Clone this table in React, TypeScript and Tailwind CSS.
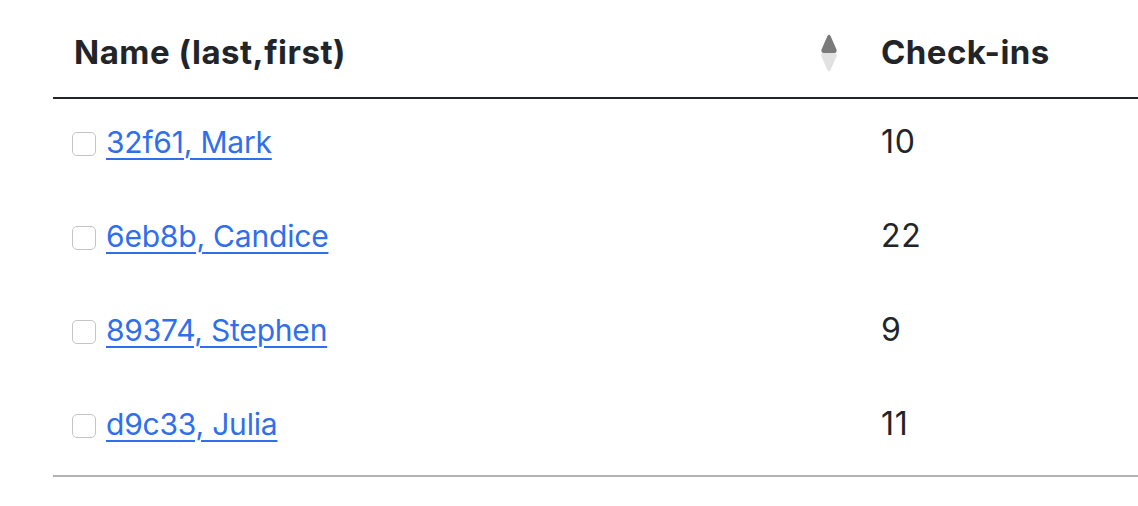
import React from "react";

const rows = [
  { name: "32f61, Mark", n: 10 },
  { name: "6eb8b, Candice", n: 22 },
  { name: "89374, Stephen", n: 9 },
  { name: "d9c33, Julia", n: 11 },
];

function SortIcon() {
  return (
    <svg width="16" height="38" viewBox="0 0 16 38">
      <path d="M6.3 2.2 Q8 -0.5 9.7 2.2 L15.5 15.5 Q16.2 19 13.5 19 L2.5 19 Q-0.2 19 0.5 15.5 Z" fill="#7a7a7a" />
      <path d="M6.3 35.8 Q8 38.5 9.7 35.8 L15.5 22.5 Q16.2 19 13.5 19 L2.5 19 Q-0.2 19 0.5 22.5 Z" fill="#e2e2e2" />
    </svg>
  );
}

export default function App() {
  return (
    <div
      className="w-[1138px] h-[506px] bg-white overflow-hidden pl-[53px] text-[#212529]"
      style={{ fontFamily: "Inter, 'Noto Sans', sans-serif" }}
    >
      <div className="w-[1120px]">
        <div className="flex h-[99px] items-center pt-[8px] border-b-2 border-[#212529]">
          <div className="w-[808px] pl-[21px] pr-[24px] flex items-center justify-between">
            <span className="text-[33px] font-bold tracking-[0.5px]">Name (last,first)</span>
            <SortIcon />
          </div>
          <div className="flex-1 pl-[20px]">
            <span className="text-[33px] font-bold tracking-[0.45px]">Check-ins</span>
          </div>
        </div>
        {rows.map((r) => (
          <div key={r.name} className="flex h-[94px] items-center pb-[8px]">
            <div className="w-[808px] pl-[19px] flex items-center gap-[10px]">
              <span className="w-[24px] h-[24px] rounded-[5px] border border-[#c4c4c4] bg-white mt-[4px]" />
              <a href="#" className="text-[30px] tracking-[-0.2px] text-[#2f6fed] underline decoration-[2px] underline-offset-[5px]">
                {r.name}
              </a>
            </div>
            <div className="flex-1 pl-[20px] text-[32px] tracking-[0.8px]">{r.n}</div>
          </div>
        ))}
        <div className="h-[2px] bg-[#b3b3b3]" />
      </div>
    </div>
  );
}
